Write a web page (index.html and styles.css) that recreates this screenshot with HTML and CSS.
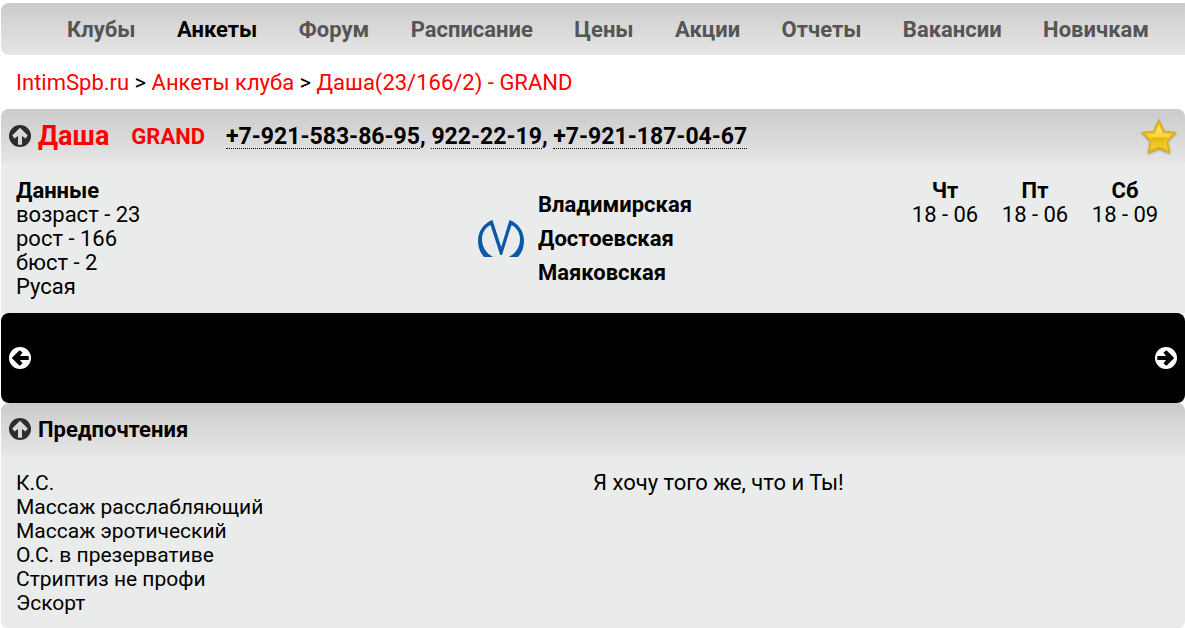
FILE: index.html
```html
<!DOCTYPE html>
<html lang="ru">
<head>
    <meta charset="UTF-8">
    <meta name="viewport" content="width=device-width, initial-scale=1.0">
    <title>Даша(23/166/2) - GRAND</title>
    <link rel="stylesheet" href="styles.css">
</head>
<body>
    <!-- shared icon shapes -->
    <svg class="defs" width="0" height="0" aria-hidden="true">
        <symbol id="arrow" viewBox="0 0 24 24">
            <circle cx="12" cy="12" r="12" fill="currentColor"/>
            <path d="M12 3L20.5 11.5L18 14.8L14.2 12V21.5H9.800V12L6 14.8L3.5 11.5Z"/>
        </symbol>
    </svg>

    <!-- MENU -->
    <nav class="menu">
        <a href="#">Клубы</a>
        <a href="#" class="active">Анкеты</a>
        <a href="#">Форум</a>
        <a href="#">Расписание</a>
        <a href="#">Цены</a>
        <a href="#">Акции</a>
        <a href="#">Отчеты</a>
        <a href="#">Вакансии</a>
        <a href="#">Новичкам</a>
    </nav>

    <div class="breadcrumbs">
        <a href="#">IntimSpb.ru</a> &gt; <a href="#">Анкеты клуба</a> &gt; <a href="#">Даша(23/166/2) - GRAND</a>
    </div>

    <!-- PROFILE -->
    <section class="panel">
        <header class="panel-head profile-head">
            <button type="button" class="icon-btn dark" aria-label="Свернуть"><svg><use href="#arrow"/></svg></button>
            <h1>Даша</h1>
            <a href="#" class="club">GRAND</a>
            <div class="phones"><a href="tel:+79215838695">+7-921-583-86-95</a>, <a href="tel:9222219">922-22-19</a>, <a href="tel:+79211870467">+7-921-187-04-67</a></div>
            <button type="button" class="star" aria-label="В избранное">
                <svg viewBox="0 0 36 36">
                    <defs>
                        <linearGradient id="gold" x1="0" y1="0" x2="0" y2="1">
                            <stop offset="0" stop-color="#ffe680"/>
                            <stop offset="0.5" stop-color="#f9d544"/>
                            <stop offset="0.56" stop-color="#e3b600"/>
                            <stop offset="1" stop-color="#f3cf35"/>
                        </linearGradient>
                    </defs>
                    <path d="M18 0.5L23.4 12.8L36 14L27 23.2L29.4 35.5L18 31L6.6 35.5L9 23.2L0 14L12.6 12.8Z" fill="#dfae0d"/>
                    <path d="M18 4.5L22.4 14.5L32.5 15.5L25.3 23L27.2 32.8L18 28.8L8.8 32.8L10.7 23L3.5 15.5L13.6 14.5Z" fill="#f0c929"/>
                    <path d="M18 7L21.7 15.7L29.5 16.5L23.8 22.7L25.3 30.2L18 27L10.7 30.2L12.2 22.7L6.5 16.5L14.3 15.7Z" fill="url(#gold)"/>
                </svg>
            </button>
        </header>
        <div class="panel-body profile">
            <div class="data">
                <b>Данные</b><br>
                возраст - 23<br>
                рост - 166<br>
                бюст - 2<br>
                Русая
            </div>
            <div class="metro">
                <svg class="metro-logo" viewBox="0 0 46 38" aria-hidden="true">
                    <path fill="#0b57a8" d="M14.5 0L23.2 27L31.5 0C40 3 46 11 46 21C46 28 43.5 33 40 37H31C38 33 42 27 42 19C42 13 39 8 33.5 5L24 35H22.2L12.500 5C7 8 4 13 4 19C4 27 8 33 15 37H6C2.500 33 0 28 0 21C0 11 6 3 14.500 0Z"/>
                </svg>
                <ul class="stations">
                    <li>Владимирская</li>
                    <li>Достоевская</li>
                    <li>Маяковская</li>
                </ul>
            </div>
            <table class="schedule">
                <thead>
                    <tr><th>Чт</th><th>Пт</th><th>Сб</th></tr>
                </thead>
                <tbody>
                    <tr><td>18 - 06</td><td>18 - 06</td><td>18 - 09</td></tr>
                </tbody>
            </table>
        </div>
    </section>

    <!-- PHOTOS -->
    <div class="gallery">
        <button type="button" class="icon-btn light prev" aria-label="Назад"><svg><use href="#arrow"/></svg></button>
        <button type="button" class="icon-btn light next" aria-label="Вперед"><svg><use href="#arrow"/></svg></button>
    </div>

    <!-- PREFERENCES -->
    <section class="panel last">
        <header class="panel-head">
            <button type="button" class="icon-btn dark" aria-label="Свернуть"><svg><use href="#arrow"/></svg></button>
            <h2>Предпочтения</h2>
        </header>
        <div class="panel-body prefs">
            <ul>
                <li>К.С.</li>
                <li>Массаж расслабляющий</li>
                <li>Массаж эротический</li>
                <li>О.С. в презервативе</li>
                <li>Стриптиз не профи</li>
                <li>Эскорт</li>
            </ul>
            <p>Я хочу того же, что и Ты!</p>
        </div>
    </section>
</body>
</html>
```
FILE: styles.css
```css
* {
    box-sizing: border-box;
}
body {
    margin: 0;
    padding: 3px 0 0 1px;
    background: #fff;
    color: #000;
    font-family: Roboto, "Liberation Sans", sans-serif;
    font-size: 22px;
    line-height: 24px;
}
a {
    color: #f00;
    text-decoration: none;
}
ul {
    list-style: none;
    margin: 0;
    padding: 0;
}
h1, h2, p {
    margin: 0;
}
button {
    border: none;
    background: none;
    padding: 0;
    cursor: pointer;
}
.defs {
    position: absolute;
}
.menu {
    display: flex;
    justify-content: space-between;
    align-items: center;
    height: 52px;
    padding: 2px 36px 0 66px;
    border-radius: 8px 0 0 8px;
    background: linear-gradient(#cbcbcb, #e6e6e6);
}
.menu a {
    color: #555;
    font-weight: bold;
}
.menu .active {
    color: #000;
}
.breadcrumbs {
    padding: 16px 15px 14px;
}
.panel {
    background: #eaeceb;
    border-radius: 8px 8px 0 0;
}
.last {
    border-radius: 8px;
}
.panel-head {
    display: flex;
    align-items: center;
    height: 52px;
    padding: 0 8px;
    border-radius: 8px 8px 0 0;
    background: linear-gradient(#cbcbcb, #e6e6e6);
}
.profile-head {
    height: 54px;
}
.panel-body {
    padding: 16px 15px 14px;
}
h1 {
    font-size: 27px;
    color: #f00;
}
h2 {
    font-size: 22px;
    padding-top: 2px;
}
.icon-btn {
    width: 22px;
    height: 22px;
    margin-right: 7px;
}
.icon-btn svg {
    display: block;
    width: 100%;
    height: 100%;
}
.dark {
    color: #2d2d2d;
    fill: #d8d8d8;
}
.light {
    color: #fff;
    fill: #000;
}
.prev {
    transform: rotate(-90deg);
}
.next {
    transform: rotate(90deg);
}
.club, .phones {
    padding-top: 2px;
    font-weight: bold;
}
.club {
    margin: 0 21px 0 22px;
}
.phones {
    font-size: 23px;
}
.phones a {
    color: #000;
    line-height: 22px;
    display: inline-block;
    border-bottom: 1px dotted #000;
}
.star {
    width: 36px;
    height: 36px;
    margin-left: auto;
    filter: drop-shadow(0 1px 1px #999);
}
.star svg {
    display: block;
}
.profile {
    display: grid;
    grid-template-columns: 1fr auto 1fr;
}
.metro {
    display: flex;
    align-items: center;
    gap: 14px;
    align-self: center;
    margin-right: 16px;
}
.metro-logo {
    width: 46px;
    height: 38px;
}
.stations {
    font-weight: bold;
    line-height: 34px;
}
.schedule {
    justify-self: end;
    align-self: start;
    border-collapse: collapse;
}
.schedule th, .schedule td {
    width: 90px;
    padding: 0;
    text-align: center;
}
.gallery {
    display: flex;
    justify-content: space-between;
    align-items: center;
    height: 90px;
    padding: 0 8px;
    border-radius: 8px;
    background: #000;
}
.gallery .icon-btn {
    margin: 0;
}
.prefs {
    display: grid;
    grid-template-columns: 1fr 1fr;
}
.prefs ul {
    font-size: 21px;
}
```
